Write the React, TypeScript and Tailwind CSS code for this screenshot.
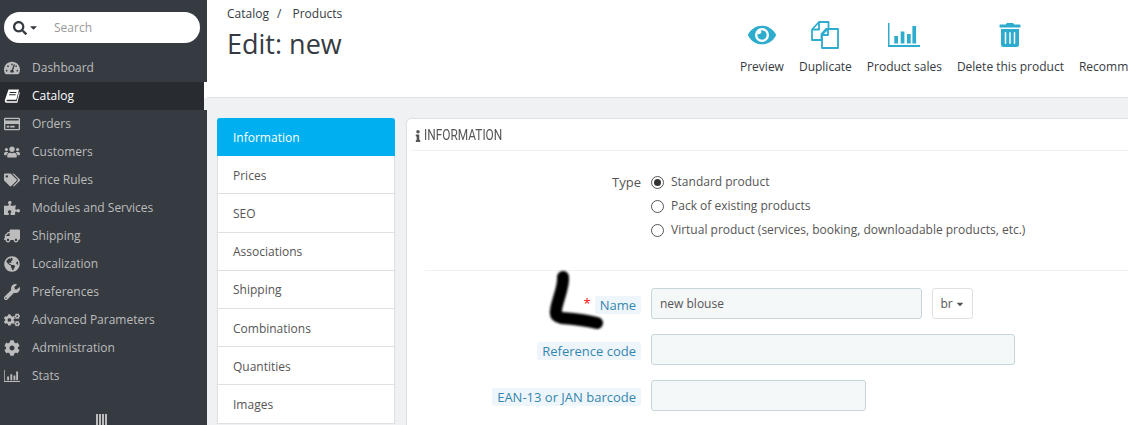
import { FaSearch, FaCaretDown, FaTachometerAlt, FaRegCreditCard, FaUsers, FaTags, FaPuzzlePiece, FaTruck, FaGlobeAmericas, FaWrench, FaCogs, FaCog, FaEye, FaTrashAlt, FaInfo } from 'react-icons/fa';

type IconProps = { size?: number; className?: string };

function ChartIcon({ size = 16, className = '' }: IconProps) {
  return (
    <svg width={size} height={size * 0.75} viewBox="0 0 32 24" className={className} fill="currentColor">
      <path d="M0 0h1.500v22H32v2H0z" />
      <path d="M6.300 13h3.700v7.600H6.300zM12.700 8.500h3.700v12.100h-3.700zM19 11h3.700v9.600H19zM24.400 3h3.700v17.600h-3.700z" />
    </svg>
  );
}

function BookIcon({ size = 16, className = '' }: IconProps) {
  return (
    <svg width={size} height={size} viewBox="0 0 16 16" className={className} fill="currentColor">
      <path d="M4.500 1.500H15l-2.700 10.200H3.300c-1 0-1.300 1.600-.2 1.600h9.600l2.300-9.200.8.700-2.500 10H2.700C.9 14.800.6 13 1 11.800z" />
      <path d="M5.800 4h6.600l-.2.900H5.600zM5.200 6.300h6.600l-.2.900H5z" fill="#282b30" />
    </svg>
  );
}

function DuplicateIcon({ size = 28, className = '' }: IconProps) {
  return (
    <svg width={size} height={size} viewBox="0 0 28 28" className={className} fill="none" stroke="currentColor" strokeWidth="1.800" strokeLinejoin="round">
      <path d="M1 8.500 8 1h9.500v7H15l-4.500 5v6H1z" />
      <path d="M1 8.500h7V1" />
      <path d="M11 13.500 16.500 8H27v19H11z" />
      <path d="M11 14h6V8" />
    </svg>
  );
}

const menu = [
  { icon: FaTachometerAlt, label: 'Dashboard' },
  { icon: BookIcon, label: 'Catalog', active: true },
  { icon: FaRegCreditCard, label: 'Orders' },
  { icon: FaUsers, label: 'Customers' },
  { icon: FaTags, label: 'Price Rules' },
  { icon: FaPuzzlePiece, label: 'Modules and Services' },
  { icon: FaTruck, label: 'Shipping', flip: true },
  { icon: FaGlobeAmericas, label: 'Localization' },
  { icon: FaWrench, label: 'Preferences' },
  { icon: FaCogs, label: 'Advanced Parameters' },
  { icon: FaCog, label: 'Administration' },
  { icon: ChartIcon, label: 'Stats' },
];

const tabs = ['Information', 'Prices', 'SEO', 'Associations', 'Shipping', 'Combinations', 'Quantities', 'Images'];

const tools = [
  { icon: FaEye, label: 'Preview', size: 28 },
  { icon: DuplicateIcon, label: 'Duplicate', size: 28 },
  { icon: ChartIcon, label: 'Product sales', size: 32 },
  { icon: FaTrashAlt, label: 'Delete this product', size: 24 },
  { icon: null, label: 'Recommended Modules', size: 0 },
];

const types = ['Standard product', 'Pack of existing products', 'Virtual product (services, booking, downloadable products, etc.)'];

function Sidebar() {
  return (
    <aside className="w-[207px] h-[425px] shrink-0 bg-[#363a41] relative overflow-hidden">
      <div className="pt-[12px] pl-[4px] pr-[7px]">
        <div className="h-[31px] bg-white rounded-full flex items-center pl-[9px]">
          <FaSearch size={14} className="text-[#363a41]" />
          <FaCaretDown size={11} className="text-[#363a41] ml-[1px]" />
          <span className="ml-[15px] text-[12px] text-[#999]">Search</span>
        </div>
      </div>
      <nav className="mt-[11px]">
        {menu.map(m => (
          <div key={m.label} className="flex h-[28px]">
            <div className={`w-[204px] flex items-center ${m.active ? 'bg-[#282b30] text-white' : 'text-[#bcbcbc]'}`}>
              <span className="w-[32px] flex items-center pl-[4px]">
                <m.icon size={16} className={m.flip ? '-scale-x-100' : ''} />
              </span>
              <span className="text-[12px]">{m.label}</span>
            </div>
            {m.active && (
              <div className="w-[3px] flex flex-col">
                <div className="h-[16px] bg-white" />
                <div className="flex-1 bg-[#eff1f2]" />
              </div>
            )}
          </div>
        ))}
      </nav>
      <div className="absolute left-[96px] top-[414px] w-[11px] h-[11px] flex justify-between">
        {[0, 1, 2, 3].map(i => <span key={i} className="w-[2px] h-full bg-[#bcbcbc]" />)}
      </div>
    </aside>
  );
}

function Header() {
  return (
    <header className="h-[98px] bg-white border-b border-[#dfe0e1] flex overflow-hidden">
      <div className="w-[533px] shrink-0 pl-[20px] pt-[5px] text-[#363a41]">
        <div className="text-[12px] leading-[17px]">
          Catalog<span className="mx-[8px]">/</span> Products
        </div>
        <h1 className="text-[27px] leading-[36px] mt-[4px]">Edit: new</h1>
      </div>
      <div className="flex gap-[15px] shrink-0 pt-[20px]">
        {tools.map(t => (
          <div key={t.label} className="flex flex-col items-center">
            <div className="h-[29px] flex items-center justify-center text-[#2eacce]">
              {t.icon && <t.icon size={t.size} />}
            </div>
            <span className="mt-[9px] text-[12px] leading-[17px] text-[#363a41] whitespace-nowrap">{t.label}</span>
          </div>
        ))}
      </div>
    </header>
  );
}

function Tabs() {
  return (
    <div className="w-[178px] shrink-0 border-x border-[#dfe0e1] rounded-t-[3px] self-start">
      {tabs.map((t, i) => (
        <div
          key={t}
          className={`h-[38.200px] flex items-center pt-[2px] pl-[15px] text-[12px] ${i === 0 ? 'bg-[#00aff0] text-white -mx-px pl-[16px] rounded-t-[3px]' : 'bg-white text-[#555] border-b border-[#dfe0e1]'}`}
        >
          {t}
        </div>
      ))}
    </div>
  );
}

function Field({ label, required, width, value }: { label: string; required?: boolean; width: string; value?: string }) {
  return (
    <div className="flex items-center h-[31px]">
      <div className="w-[234px] flex justify-end items-center">
        {required && <span className="text-[#f00] text-[13px] mr-[4px]">*</span>}
        <span className="bg-[#eff6fb] text-[#3586ae] text-[13px] leading-[18px] px-[5px] rounded-[2px] mt-[2px]">{label}</span>
      </div>
      <div className={`ml-[10px] h-[31px] ${width} bg-[#f5f8f9] border border-[#c7d6db] rounded-[3px] flex items-center pl-[8px] text-[12px] text-[#555]`}>
        {value}
      </div>
      {required && (
        <div className="ml-[10px] w-[41px] h-[31px] bg-white border border-[#dfe0e1] rounded-[3px] flex items-center justify-center text-[12px] text-[#555]">
          br<FaCaretDown size={10} className="ml-[2px]" />
        </div>
      )}
    </div>
  );
}

function Panel() {
  return (
    <section className="flex-1 h-[400px] bg-white border border-[#dfe0e1] rounded-[5px] px-[4px]">
      <div className="h-[32px] border-b border-[#eff1f2] flex items-center pt-[2px] pl-[1px] text-[#555]">
        <FaInfo size={12} />
        <span className="font-['Roboto',sans-serif] text-[14.500px] scale-x-[0.82] origin-left whitespace-nowrap">INFORMATION</span>
      </div>
      <div className="-mx-[4px]">
        <div className="flex pt-[23px]">
          <div className="w-[234px] text-right text-[13px] leading-[16px] text-[#555]">Type</div>
          <div className="ml-[10px] flex flex-col gap-[8px]">
            {types.map((t, i) => (
              <div key={t} className="flex items-center h-[16px] text-[12px] text-[#555] whitespace-nowrap">
                <span className="w-[13px] h-[13px] rounded-full border border-[#555] bg-white flex items-center justify-center mr-[7px]">
                  {i === 0 && <span className="w-[7px] h-[7px] rounded-full bg-[#333]" />}
                </span>
                {t}
              </div>
            ))}
          </div>
        </div>
        <div className="ml-[18px] mt-[32px] border-t border-[#eff1f2]" />
        <div className="mt-[17px] flex flex-col gap-[15px]">
          <Field label="Name" required width="w-[271px]" value="new blouse" />
          <Field label="Reference code" width="w-[364px]" />
          <Field label="EAN-13 or JAN barcode" width="w-[215px]" />
        </div>
      </div>
    </section>
  );
}

export default function App() {
  return (
    <div className="w-[1128px] h-[425px] overflow-hidden flex relative bg-[#eff1f2] font-['Open_Sans',sans-serif]">
      <Sidebar />
      <main className="flex-1 min-w-0">
        <Header />
        <div className="flex gap-[11px] pl-[10px] pt-[20px] -mr-[10px]">
          <Tabs />
          <Panel />
        </div>
      </main>
      <svg className="absolute left-0 top-0 pointer-events-none blur-[1px]" width="1128" height="425" fill="none">
        <path d="M563 277c1 10-6 24-7 33-1 5 1 7 6 8 12 1 24 2 35 5" stroke="#000" strokeWidth="12" strokeLinecap="round" strokeLinejoin="round" />
      </svg>
    </div>
  );
}
